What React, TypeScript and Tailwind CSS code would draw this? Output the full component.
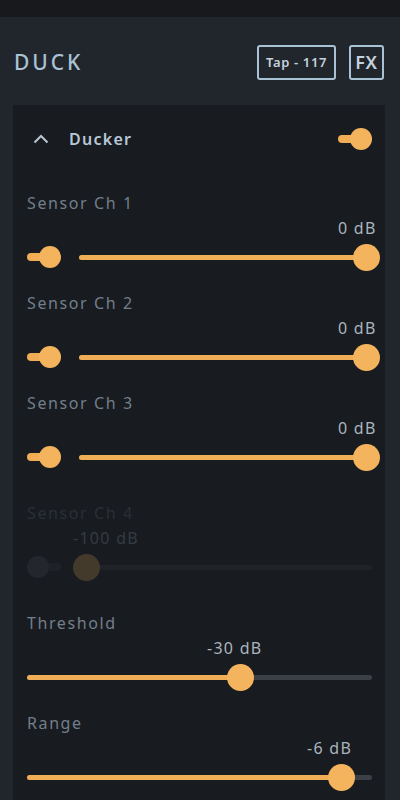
// Ducker panel — mobile mixer view

import React from 'react'

// ─────────────────────────────────────────────────────────────────────────────
// SMALL PARTS
// ─────────────────────────────────────────────────────────────────────────────

function Toggle({ on = true }: { on?: boolean }) {
  return (
    <div className="relative h-[22px] w-[34px] shrink-0">
      <div
        className={
          on
            ? 'absolute left-0 top-[7px] h-[8px] w-[24px] rounded-full bg-[#f0ad55]'
            : 'absolute right-0 top-[7px] h-[8px] w-[24px] rounded-full bg-[#3a4048]'
        }
      />
      <div
        className={
          on
            ? 'absolute right-0 top-0 h-[22px] w-[22px] rounded-full bg-[#f4b45e]'
            : 'absolute left-0 top-0 h-[22px] w-[22px] rounded-full bg-[#4f5763]'
        }
      />
    </div>
  )
}

interface SliderProps {
  thumb: number // thumb centre, px from track left
  width: number
}

function Slider({ thumb, width }: SliderProps) {
  return (
    <div className="relative h-[34px] shrink-0" style={{ width }}>
      <div className="absolute left-0 right-0 top-[15px] h-[5px] rounded-full bg-[#3b4047]" />
      <div
        className="absolute left-0 top-[15px] h-[5px] rounded-full bg-[#f0ad55]"
        style={{ width: thumb }}
      />
      <div
        className="absolute top-[4px] h-[27px] w-[27px] rounded-full bg-[#f4b45e]"
        style={{ left: thumb - 13.5 }}
      />
    </div>
  )
}

interface SectionProps {
  label: string
  value: string
  valueLeft: number // px from card content left
  thumb: number
  sensor?: boolean
  disabled?: boolean
}

function Section({ label, value, valueLeft, thumb, sensor, disabled }: SectionProps) {
  return (
    <div className={disabled ? 'py-[10px] opacity-20' : ''}>
      <div className="flex h-[26px] items-center whitespace-nowrap text-[16px] tracking-[0.1em] text-[#737f8b]">
        {label}
      </div>
      <div className="h-[24px] whitespace-nowrap text-[16px] leading-[24px] tracking-[0.08em] text-[#aab4be]">
        <span className="block" style={{ paddingLeft: valueLeft }}>
          {value}
        </span>
      </div>
      <div className="box-content flex h-[34px] items-center pb-[16px]">
        {sensor ? (
          <>
            <Toggle on={!disabled} />
            <div className="w-[18px] shrink-0" />
            <Slider thumb={thumb} width={293} />
          </>
        ) : (
          <Slider thumb={thumb} width={345} />
        )}
      </div>
    </div>
  )
}

// ─────────────────────────────────────────────────────────────────────────────
// APP
// ─────────────────────────────────────────────────────────────────────────────

export default function App() {
  return (
    <div
      className="h-[800px] w-[400px] overflow-hidden bg-[#21262c]"
      style={{ fontFamily: '"Noto Sans", "DejaVu Sans", sans-serif' }}
    >
      {/* top strip */}
      <div className="h-[17px] bg-[#17191c]" />

      {/* header */}
      <div className="flex h-[88px] items-center justify-between pl-[14px] pr-[16px] pt-[3px]">
        <div className="text-[21px] font-medium tracking-[0.14em] text-[#a9c2d6]">DUCK</div>
        <div className="flex items-center gap-[13px]">
          <div className="flex h-[35px] w-[79px] items-center justify-center rounded-[3px] border-2 border-[#a9c2d6] text-[13px] font-semibold tracking-[0.05em] text-[#c4d2de]">
            Tap - 117
          </div>
          <div className="flex h-[35px] w-[35px] items-center justify-center rounded-[3px] border-2 border-[#a9c2d6] text-[18px] font-semibold tracking-[0.04em] text-[#c4d2de]">
            FX
          </div>
        </div>
      </div>

      {/* card */}
      <div className="ml-[13px] w-[372px] bg-[#181b20] pl-[14px] pr-[13px]">
        <div className="flex h-[85px] items-start justify-between pt-[18px]">
          <div className="flex h-[32px] items-center">
            <svg width="16" height="10" viewBox="0 0 16 10" className="ml-[6px]">
              <path d="M1.5 8.5 L8 2 L14.5 8.5" fill="none" stroke="#b9c7d4" strokeWidth="2" />
            </svg>
            <span className="ml-[20px] text-[16px] font-semibold tracking-[0.08em] text-[#b9c8d6]">
              Ducker
            </span>
          </div>
          <div className="flex h-[32px] items-center">
            <Toggle />
          </div>
        </div>

        <Section label="Sensor Ch 1" value="0 dB" valueLeft={311} thumb={287} sensor />
        <Section label="Sensor Ch 2" value="0 dB" valueLeft={311} thumb={287} sensor />
        <Section label="Sensor Ch 3" value="0 dB" valueLeft={311} thumb={287} sensor />
        <Section label="Sensor Ch 4" value="-100 dB" valueLeft={46} thumb={7} sensor disabled />
        <Section label="Threshold" value="-30 dB" valueLeft={180} thumb={213} />
        <Section label="Range" value="-6 dB" valueLeft={280} thumb={314} />
      </div>
    </div>
  )
}
